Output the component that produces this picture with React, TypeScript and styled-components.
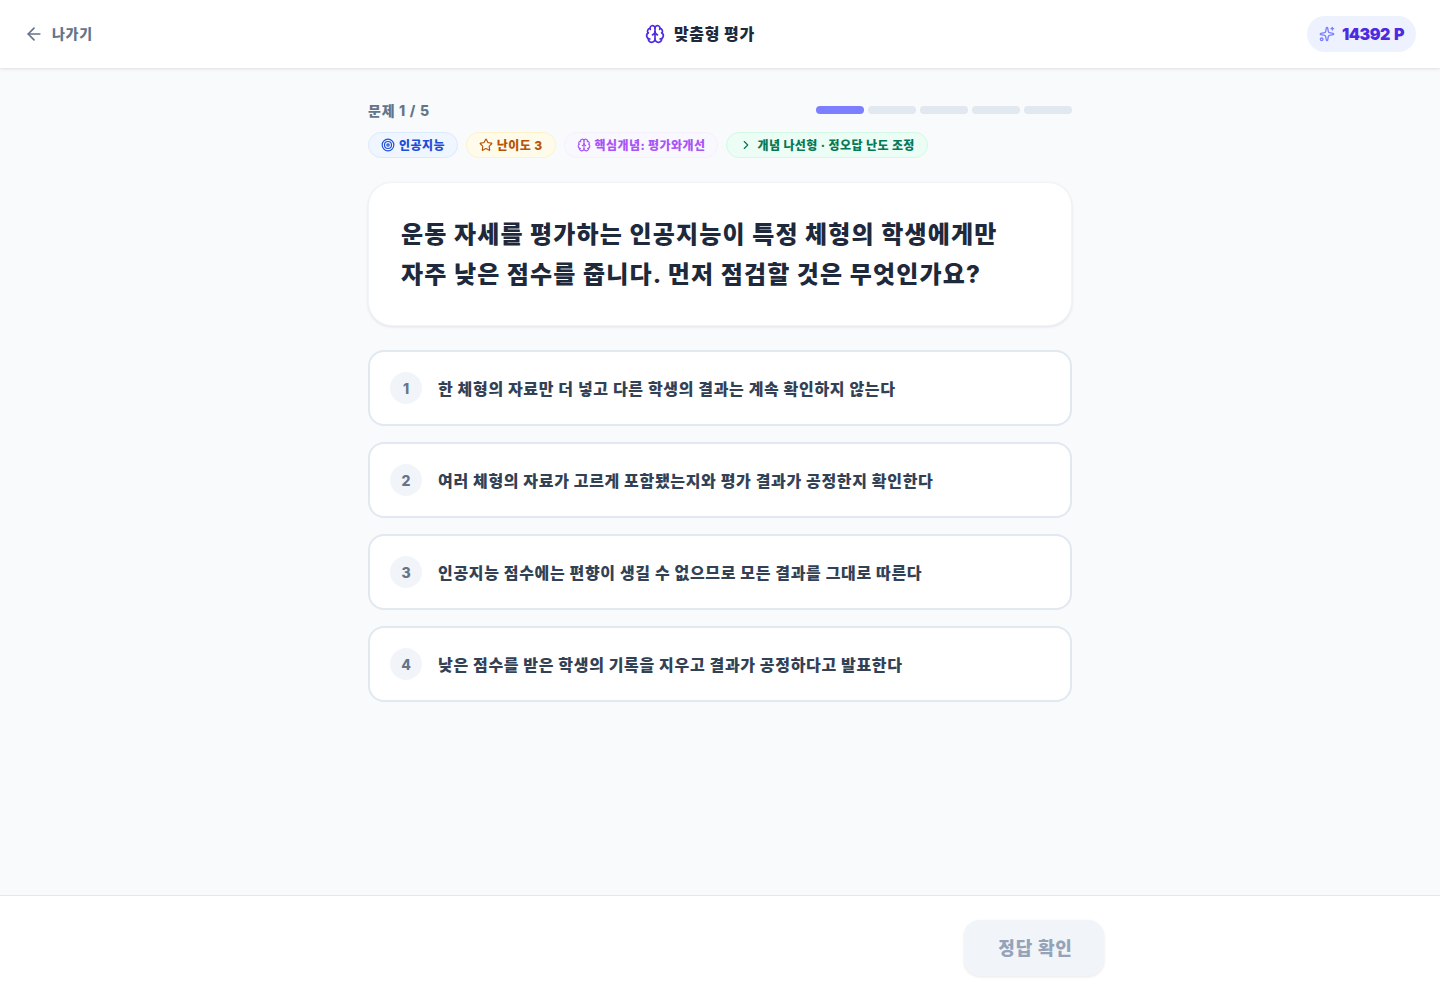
import React from "react";
import styled, { createGlobalStyle } from "styled-components";
import { ArrowLeft, Brain, ChevronRight, Sparkles, Star, Target } from "lucide-react";

const Global = createGlobalStyle`
  * { box-sizing: border-box; }
  html, body { margin: 0; padding: 0; height: 100%; }
  body {
    background: #f8fafc;
    font-family: Inter, "Noto Sans CJK KR", sans-serif;
    color: #0f172a;
  }
`;

const Page = styled.div`
  height: 1000px;
  display: flex;
  flex-direction: column;
`;

const Header = styled.header`
  height: 68px;
  flex: none;
  background: #fff;
  box-shadow: 0 1px 3px rgba(15, 23, 42, 0.12);
  display: flex;
  align-items: center;
  justify-content: space-between;
  padding: 0 24px;
  position: relative;
`;

const BackLink = styled.div`
  display: flex;
  align-items: center;
  gap: 8px;
  font-size: 14px;
  font-weight: 800;
  letter-spacing: 0.7px;
  color: #64748b;
`;

const HeaderTitle = styled.div`
  display: flex;
  align-items: center;
  gap: 9px;
  font-size: 16px;
  font-weight: 800;
  letter-spacing: 0.6px;
  color: #1e293b;
`;

const RaisedLabel = styled.span`
  margin-top: -2px;
`;

const Points = styled.div`
  display: flex;
  align-items: center;
  gap: 7px;
  height: 36px;
  padding: 0 12px;
  border-radius: 18px;
  background: #eef2ff;
  font-size: 16px;
  font-weight: 900;
  letter-spacing: -0.5px;
  word-spacing: 1.5px;
  color: #4f2be0;
`;

const Main = styled.main`
  flex: 1;
  width: 704px;
  margin: 0 auto;
  padding-top: 32px;
  display: flex;
  flex-direction: column;
`;

const ProgressRow = styled.div`
  display: flex;
  align-items: center;
  justify-content: space-between;
  height: 20px;
`;

const ProblemCount = styled.div`
  font-size: 14px;
  font-weight: 800;
  letter-spacing: 0.75px;
  color: #64748b;
`;

const Segments = styled.div`
  display: flex;
  gap: 4px;
`;

const Segment = styled.div<{ $active?: boolean }>`
  width: 48px;
  height: 8px;
  border-radius: 4px;
  background: ${(p) => (p.$active ? "#7c7fff" : "#e2e8f0")};
`;

const Tags = styled.div`
  display: flex;
  gap: 8px;
  margin-top: 12px;
`;

const tagColors = {
  blue: { bg: "#eff6ff", border: "#dbeafe", fg: "#1d4ed8" },
  amber: { bg: "#fffbeb", border: "#fef3c7", fg: "#b45309" },
  purple: { bg: "#faf8ff", border: "#f5f0ff", fg: "#a855f7" },
  green: { bg: "#ecfdf5", border: "#d1fae5", fg: "#047857" },
};

const Tag = styled.div<{ $tone: keyof typeof tagColors }>`
  display: flex;
  align-items: center;
  gap: 4px;
  height: 26px;
  padding: 0 12px;
  border-radius: 13px;
  border: 1px solid ${(p) => tagColors[p.$tone].border};
  background: ${(p) => tagColors[p.$tone].bg};
  color: ${(p) => tagColors[p.$tone].fg};
  font-size: 12px;
  font-weight: 800;
  letter-spacing: 0.42px;
`;

const QuestionCard = styled.section`
  margin-top: 24px;
  background: #fff;
  border: 1px solid #f1f5f9;
  border-radius: 24px;
  box-shadow: 0 1px 3px rgba(15, 23, 42, 0.1);
  padding: 32px;
  height: 144px;
`;

const QuestionText = styled.h1`
  margin: 0;
  font-size: 24px;
  line-height: 40px;
  font-weight: 800;
  letter-spacing: 1.17px;
  color: #1e293b;
`;

const Options = styled.div`
  margin-top: 24px;
  display: flex;
  flex-direction: column;
  gap: 16px;
`;

const Option = styled.div`
  height: 76px;
  background: #fff;
  border: 2px solid #e2e8f0;
  border-radius: 16px;
  padding: 0 20px;
  display: flex;
  align-items: center;
  gap: 16px;
`;

const OptionNumber = styled.div`
  width: 32px;
  height: 32px;
  border-radius: 50%;
  background: #f1f5f9;
  color: #64748b;
  display: flex;
  align-items: center;
  justify-content: center;
  font-size: 14px;
  font-weight: 800;
  flex: none;
`;

const OptionText = styled.div`
  font-size: 16px;
  font-weight: 800;
  letter-spacing: 0.68px;
  color: #334155;
`;

const Footer = styled.footer`
  height: 105px;
  flex: none;
  background: #fff;
  border-top: 1px solid #e2e8f0;
  display: flex;
  justify-content: flex-end;
  padding: 24px 336px 0 0;
`;

const SubmitButton = styled.button`
  width: 140px;
  height: 56px;
  border: none;
  border-radius: 16px;
  padding: 0 0 2px 3px;
  background: #f1f5f9;
  color: #94a3b8;
  font-family: inherit;
  letter-spacing: 0.85px;
  font-size: 18px;
  font-weight: 800;
  box-shadow: 0 1px 3px rgba(15, 23, 42, 0.1);
`;

const options = [
  "한 체형의 자료만 더 넣고 다른 학생의 결과는 계속 확인하지 않는다",
  "여러 체형의 자료가 고르게 포함됐는지와 평가 결과가 공정한지 확인한다",
  "인공지능 점수에는 편향이 생길 수 없으므로 모든 결과를 그대로 따른다",
  "낮은 점수를 받은 학생의 기록을 지우고 결과가 공정하다고 발표한다",
];

export default function App() {
  return (
    <Page>
      <Global />
      <Header>
        <BackLink>
          <ArrowLeft size={20} />
          <RaisedLabel>나가기</RaisedLabel>
        </BackLink>
        <HeaderTitle>
          <Brain size={20} color="#4f2be0" />
          <RaisedLabel>맞춤형 평가</RaisedLabel>
        </HeaderTitle>
        <Points>
          <Sparkles size={16} color="#7c7fff" />
          14392 P
        </Points>
      </Header>
      <Main>
        <ProgressRow>
          <ProblemCount>문제 1 / 5</ProblemCount>
          <Segments>
            <Segment $active />
            <Segment />
            <Segment />
            <Segment />
            <Segment />
          </Segments>
        </ProgressRow>
        <Tags>
          <Tag $tone="blue">
            <Target size={14} />
            <RaisedLabel>인공지능</RaisedLabel>
          </Tag>
          <Tag $tone="amber">
            <Star size={14} />
            <RaisedLabel>난이도 3</RaisedLabel>
          </Tag>
          <Tag $tone="purple">
            <Brain size={14} />
            <RaisedLabel>핵심개념: 평가와개선</RaisedLabel>
          </Tag>
          <Tag $tone="green">
            <ChevronRight size={14} />
            <RaisedLabel>개념 나선형 · 정오답 난도 조정</RaisedLabel>
          </Tag>
        </Tags>
        <QuestionCard>
          <QuestionText>
            운동 자세를 평가하는 인공지능이 특정 체형의 학생에게만
            <br />
            자주 낮은 점수를 줍니다. 먼저 점검할 것은 무엇인가요?
          </QuestionText>
        </QuestionCard>
        <Options>
          {options.map((text, i) => (
            <Option key={text}>
              <OptionNumber>{i + 1}</OptionNumber>
              <OptionText>{text}</OptionText>
            </Option>
          ))}
        </Options>
      </Main>
      <Footer>
        <SubmitButton disabled>정답 확인</SubmitButton>
      </Footer>
    </Page>
  );
}
